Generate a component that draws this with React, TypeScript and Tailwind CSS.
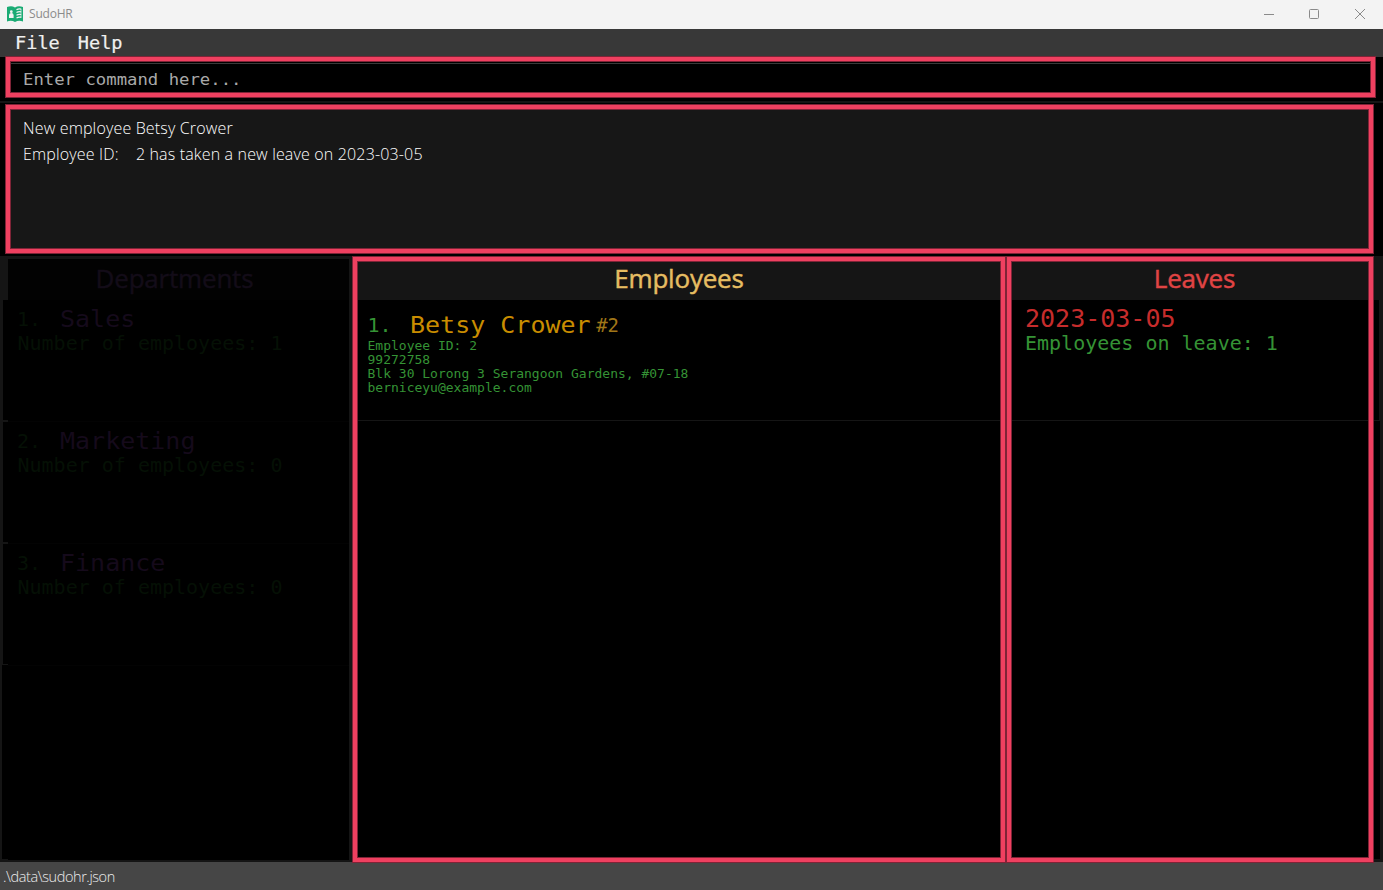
import React from "react";

const MONO = "font-['DejaVu_Sans_Mono',monospace] whitespace-pre";
const SANS = "font-['Open_Sans','Noto_Sans',sans-serif] whitespace-pre";
const TITLE = "text-center text-[26px] font-normal [-webkit-text-stroke:0.45px_currentColor] tracking-[-0.200px]";

function Highlight({ className }: { className: string }) {
  return (
    <div
      className={`pointer-events-none absolute z-10 border-4 border-[#ef4060] shadow-[0_0_0_1px_#7f2437,inset_0_0_0_1px_#7f2437] ${className}`}
    />
  );
}

function Logo() {
  return (
    <svg width="16" height="16" viewBox="0 0 16 16" className="ml-[7px]">
      <path d="M0 1C3 0 5.600 0 8 1.400 10.400 0 13 0 16 1V15.500C13 14.400 10.600 14.500 8 16 5.400 14.500 3 14.400 0 15.500Z" fill="#1aab74" />
      <circle cx="4.300" cy="5.700" r="1.400" fill="#f3f3f3" />
      <path d="M2 12V9.500C2 7.800 3 7 4.300 7S6.600 7.800 6.600 9.500V12Z" fill="#f3f3f3" />
      <path d="M9.500 3.800C11 2.900 12.500 2.800 14.200 3.100M9.500 6.500C11 5.600 12.500 5.500 14.200 5.800M9.500 9.200C11 8.300 12.500 8.200 14.200 8.500M9.500 11.900C11 11 12.500 10.900 14.200 11.200" stroke="#f3f3f3" strokeWidth="1.200" fill="none" />
      <path d="M14 3V12" stroke="#f3f3f3" strokeWidth="0.600" />
    </svg>
  );
}

const departments = [
  { index: "1.", name: "Sales", count: 1 },
  { index: "2.", name: "Marketing", count: 0 },
  { index: "3.", name: "Finance", count: 0 },
];

export default function App() {
  return (
    <div className="flex h-[890px] w-[1383px] flex-col overflow-hidden bg-black">
      <header className="flex h-[29px] shrink-0 items-center bg-[#f3f3f3] pb-[2px]">
        <Logo />
        <span className={`${SANS} ml-[6px] text-[12px] tracking-[-0.200px] text-[#8b8b8b]`}>SudoHR</span>
        <svg width="104" height="12" viewBox="0 0 104 12" className="ml-auto mr-[16px]" fill="none" stroke="#8a8a8a">
          <path d="M1 6.500H11" />
          <rect x="46.500" y="1.500" width="9" height="9" rx="1" />
          <path d="M92 1L102 11M102 1L92 11" />
        </svg>
      </header>

      <nav className={`${MONO} flex h-7 shrink-0 items-center gap-[18px] bg-[#383838] pl-[15px] text-[18.600px] leading-7 text-[#f0f0f0] [-webkit-text-stroke:0.200px_currentColor]`}>
        <span className="inline-block scale-y-[0.96]">File</span>
        <span className="inline-block scale-y-[0.96]">Help</span>
      </nav>

      <section className="relative h-[44px] shrink-0 pt-[6px]">
        <Highlight className="left-[6px] top-0 h-[40px] w-[1369px]" />
        <div className="ml-[11px] mr-[13px] flex h-[34px] items-center border-t border-[#3a3a3a] pb-[2px] pl-3">
          <span className={`${MONO} inline-block scale-y-[0.95] text-[17.300px] text-[#a9a9a9]`}>Enter command here...</span>
        </div>
      </section>
      <div className="h-[2px] shrink-0 bg-[#151515]" />

      <section className="relative h-[153px] shrink-0 pt-[7px]">
        <Highlight className="left-[6px] top-[2px] h-[148px] w-[1367px]" />
        <div className={`${SANS} ml-[11px] mr-[15px] h-[139px] bg-[#171717] pl-3 pt-[5px] text-[16px] font-light leading-[26px] tracking-[0.160px] text-white`}>
          <p>New employee Betsy Crower</p>
          <p>Employee ID:    2 has taken a new leave on 2023-03-05</p>
        </div>
      </section>

      <main className="flex h-[606px] shrink-0 bg-[#151515]">
        <section className="flex w-[352px] pt-[3px]">
          <div className="flex w-[8px] flex-col pl-[2px] pt-[41px]">
            <div className="ml-px h-[120px] bg-black" />
            <div className="ml-px mt-[2px] h-[120px] bg-black" />
            <div className="ml-px mt-[2px] h-[120px] bg-black" />
            <div className="mt-px h-[194px] bg-black" />
          </div>
          <div className="mb-[2px] w-[341px] bg-black">
            <h2 className={`${SANS} ${TITLE} h-[41px] bg-[#020202] pr-[8px] leading-[39px] text-[#130c18]`}>Departments</h2>
            {departments.map((d) => (
              <div key={d.name} className={`${MONO} h-[122px] border-b border-[#030303] pl-[9px] pt-[4px] text-[20px] text-[#051005]`}>
                <div className="flex h-[26px] items-start">
                  <span className="w-[43px] scale-y-[0.96] pt-[2px] leading-[26px]">{d.index}</span>
                  <span className="scale-y-[0.92] pt-[3px] text-[25px] leading-[26px] text-[#150a1b]">{d.name}</span>
                </div>
                <div className="mt-px h-6 scale-y-[0.95] pl-[0.500px] leading-[25px]">Number of employees: {d.count}</div>
              </div>
            ))}
          </div>
        </section>

        <section className="relative flex w-[654px] flex-col">
          <Highlight className="left-px top-px h-[605px] w-[652px]" />
          <h2 className={`${SANS} ${TITLE} h-[44px] shrink-0 leading-[45px] text-[#e6bd62]`}>Employees</h2>
          <div className={`${MONO} h-[120px] shrink-0 bg-black pl-[15.500px] pt-[10px] text-[#359335]`}>
            <div className="flex h-[29px] items-start text-[20px] leading-[30px]">
              <span className="w-[42.500px] scale-y-[0.96]">1.</span>
              <span className="scale-y-[0.92] pt-px text-[25px] text-[#c98d00]">Betsy Crower</span>
              <span className="ml-[5.500px] text-[19px] text-[#a07618]">#2</span>
            </div>
            <div className="text-[13px] leading-[14px]">
              <p className="scale-y-[0.95]">Employee ID: 2</p>
              <p className="scale-y-[0.95]">99272758</p>
              <p className="scale-y-[0.95]">Blk 30 Lorong 3 Serangoon Gardens, #07-18</p>
              <p className="scale-y-[0.95]">berniceyu@example.com</p>
            </div>
          </div>
          <div className="mt-px grow bg-black" />
        </section>

        <section className="relative flex w-[377px] flex-col">
          <Highlight className="left-px top-px h-[605px] w-[366px]" />
          <h2 className={`${SANS} ${TITLE} h-[44px] shrink-0 leading-[45px] text-[#e04444]`}>Leaves</h2>
          <div className={`${MONO} mr-[4px] h-[120px] shrink-0 bg-black pl-[19px] pt-[5px] text-[#359335]`}>
            <div className="h-[26px] text-[25px] leading-[28px] text-[#c72c2c]">2023-03-05</div>
            <div className="h-6 scale-y-[0.95] text-[20px] leading-[25px]">Employees on leave: 1</div>
          </div>
          <div className="mb-[3px] mr-[3px] mt-px grow bg-black" />
        </section>
      </main>

      <footer className={`${SANS} h-7 shrink-0 bg-[#464646] pl-[3px] text-[14.500px] font-light leading-[29px] tracking-[-0.420px] text-[#ececec]`}>.\data\sudohr.json</footer>
    </div>
  );
}
